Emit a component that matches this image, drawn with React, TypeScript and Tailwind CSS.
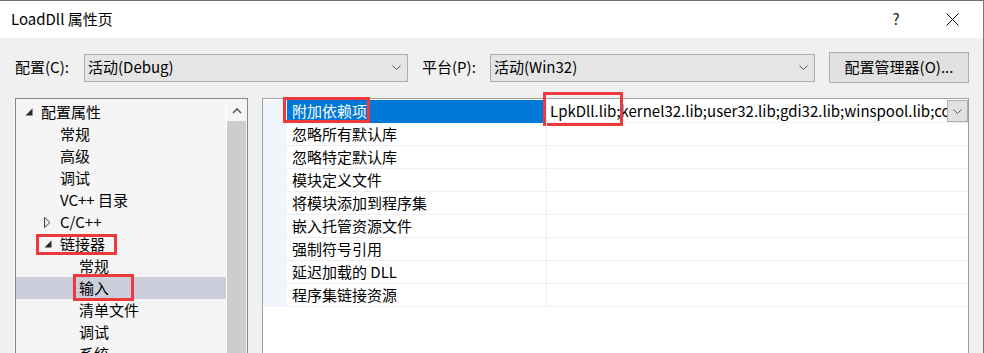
import React from 'react';

type TreeItem = {
  label: string;
  level: number;
  arrow?: 'open' | 'closed';
  selected?: boolean;
  mark?: string;
};

const tree: TreeItem[] = [
  { label: '配置属性', level: 0, arrow: 'open' },
  { label: '常规', level: 1 },
  { label: '高级', level: 1 },
  { label: '调试', level: 1 },
  { label: 'VC++ 目录', level: 1 },
  { label: 'C/C++', level: 1, arrow: 'closed' },
  { label: '链接器', level: 1, arrow: 'open', mark: 'left-[20px] top-[1px] w-[81px] h-[21px]' },
  { label: '常规', level: 2 },
  { label: '输入', level: 2, selected: true, mark: 'left-[57px] top-[-3px] w-[61px] h-[27px]' },
  { label: '清单文件', level: 2 },
  { label: '调试', level: 2 },
  { label: '系统', level: 2 },
];

const indent = ['pl-[9px]', 'pl-[28px]', 'pl-[47px]'];

const props = [
  '附加依赖项',
  '忽略所有默认库',
  '忽略特定默认库',
  '模块定义文件',
  '将模块添加到程序集',
  '嵌入托管资源文件',
  '强制符号引用',
  '延迟加载的 DLL',
  '程序集链接资源',
];

const Chevron = () => (
  <svg width="9" height="5" viewBox="0 0 9 5" className="shrink-0">
    <path d="M0.5 0.5 L4.5 4.5 L8.5 0.5" fill="none" stroke="#5a5a5a" strokeWidth="1" />
  </svg>
);

const Arrow = ({ kind }: { kind?: 'open' | 'closed' }) => (
  <span className="w-[16px] h-[22px] flex items-center shrink-0">
    {kind === 'open' && (
      <svg width="8" height="8" viewBox="0 0 8 8">
        <path d="M7.5 0.5 L7.5 7.5 L0.5 7.5 Z" fill="#262626" />
      </svg>
    )}
    {kind === 'closed' && (
      <svg width="7" height="11" viewBox="0 0 7 11" className="mt-[1px]">
        <path d="M0.5 0.5 L6 5.5 L0.5 10.5 Z" fill="none" stroke="#444" strokeWidth="1" />
      </svg>
    )}
  </span>
);

const Combo = ({ text, width }: { text: string; width: string }) => (
  <div className={`${width} h-[28px] bg-[#e5e5e5] border border-[#adadad] flex items-center pl-[3px] pr-[6px]`}>
    <span className="flex-1">{text}</span>
    <Chevron />
  </div>
);

export default function App() {
  return (
    <div
      className="w-[984px] h-[353px] overflow-hidden bg-[#f0f0f0] border-t border-t-[#6f6f6f] border-r border-r-[#777] text-[15px] text-black"
      style={{ fontFamily: '"Noto Sans CJK SC", "Noto Sans", sans-serif' }}
    >
      {/* title bar */}
      <div className="h-[37px] bg-white flex items-center pl-[11px]">
        <span className="flex-1 text-[15px]">LoadDll 属性页</span>
        <span className="w-[20px] text-[15px] text-[#222] mr-[40px] text-center">?</span>
        <svg width="13" height="13" viewBox="0 0 13 13" className="mr-[24px]">
          <path d="M0.5 0.5 L12.5 12.5 M12.5 0.5 L0.5 12.5" stroke="#111" strokeWidth="1" />
        </svg>
      </div>

      {/* config row */}
      <div className="flex items-center h-[31px] mt-[14px] pl-[15px] pr-[14px]">
        <span className="w-[69px]">配置(C):</span>
        <Combo text="活动(Debug)" width="w-[324px]" />
        <span className="ml-[14px] w-[68px]">平台(P):</span>
        <Combo text="活动(Win32)" width="w-[325px]" />
        <div className="ml-[14px] w-[140px] h-[31px] bg-[#e1e1e1] border border-[#adadad] flex items-center justify-center">
          配置管理器(O)...
        </div>
      </div>

      {/* panels */}
      <div className="flex mt-[15px] pl-[15px] gap-[14px]">
        {/* tree */}
        <div className="w-[233px] h-[260px] border border-[#828790] bg-[#f5f5f5] flex">
          <div className="flex-1 pt-[2px]">
            {tree.map((item, i) => (
              <div
                key={i}
                className={`relative h-[22px] flex items-center ${indent[item.level]} ${
                  item.selected ? 'bg-[#cccedb]' : ''
                }`}
              >
                <Arrow kind={item.arrow} />
                <span className="leading-[22px] whitespace-nowrap">{item.label}</span>
                {item.mark && (
                  <div className={`absolute border-[3px] border-[#ec3a3a] ${item.mark}`} />
                )}
              </div>
            ))}
          </div>
          <div className="w-[21px] border-l border-white flex flex-col pr-[1px]">
            <div className="h-[22px] flex items-center justify-center">
              <svg width="10" height="7" viewBox="0 0 10 7">
                <path d="M1 6 L5 2 L9 6" fill="none" stroke="#5f5f5f" strokeWidth="1.6" />
              </svg>
            </div>
            <div className="flex-1 bg-[#cdcdcd]" />
          </div>
        </div>

        {/* property grid */}
        <div className="w-[707px] h-[260px] border border-[#a0a0a0] bg-white pt-[1px]">
          {props.map((name, i) => (
            <div key={i} className="flex h-[23px]">
              <div className="w-[24px] bg-[#f0f4fb]" />
              <div
                className={`relative w-[260px] pl-[5px] flex items-center border-r border-[#ededf5] ${
                  i === 0 ? 'bg-[#0078d7] text-white' : 'border-b'
                }`}
              >
                {name}
                {i === 0 && (
                  <div className="absolute left-[-4px] top-[-3px] w-[87px] h-[26px] border-[3px] border-[#ec3a3a]" />
                )}
              </div>
              <div className="relative flex-1 flex items-center border-b border-[#ededf5] min-w-0">
                {i === 0 && (
                  <>
                    <span className="flex-1 pl-[3px] whitespace-nowrap overflow-hidden">
                      LpkDll.lib;kernel32.lib;user32.lib;gdi32.lib;winspool.lib;comdlg32.lib;advapi32.lib
                    </span>
                    <div className="w-[21px] h-[22px] bg-[#e1e1e1] border border-[#adadad] flex items-center justify-center shrink-0">
                      <Chevron />
                    </div>
                    <div className="absolute left-[-4px] top-[-8px] w-[80px] h-[34px] border-[3px] border-[#ec3a3a]" />
                  </>
                )}
              </div>
            </div>
          ))}
        </div>
      </div>
    </div>
  );
}
